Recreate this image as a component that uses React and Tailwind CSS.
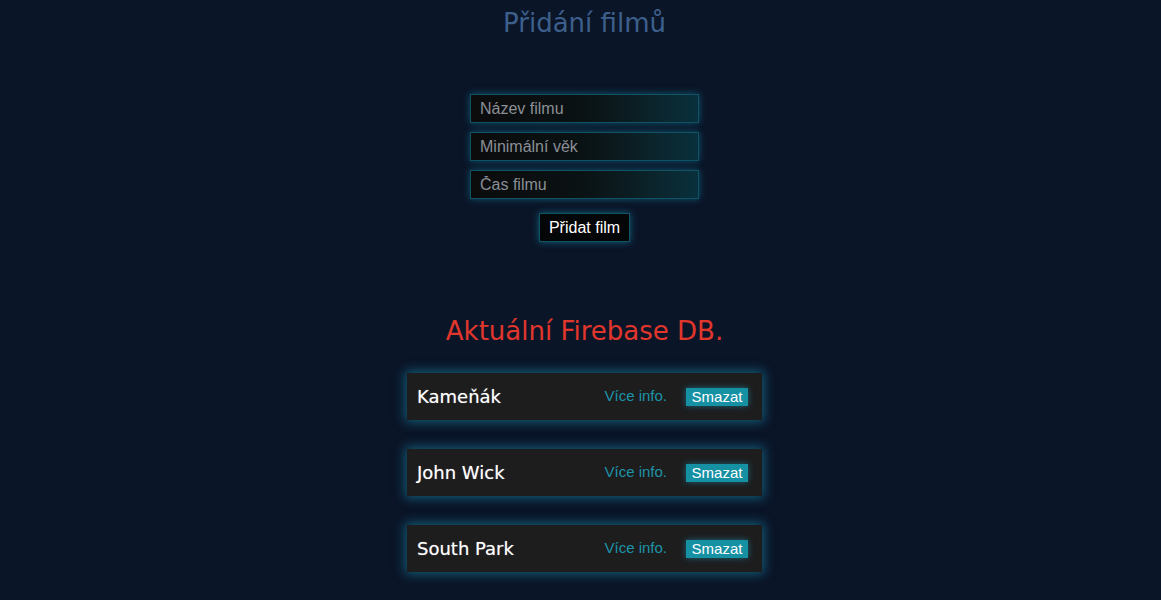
import React, { useState } from "react";

const FILMS = ["Kameňák", "John Wick", "South Park"];

const inputCls =
  "w-[229px] h-[29px] px-[9px] text-[16px] text-gray-200 placeholder:text-[#8a8f96] border border-[#0f5364] bg-gradient-to-r from-[#0b0b0c] via-[#0a1214] to-[#08303c] shadow-[0_0_7px_rgba(20,150,180,0.5)] outline-none font-['Liberation_Sans',Arial,sans-serif]";

const App = () => {
  const [form, setForm] = useState({ name: "", age: "", time: "" });

  const handleChange = (e) =>
    setForm({ ...form, [e.target.name]: e.target.value });

  return (
    <div className="min-h-screen bg-[#0b1528] flex flex-col items-center pl-[8px]">
      <h1 className="mt-[4px] text-[26px] leading-[38px] text-[#3d5f8c] font-['DejaVu_Sans',sans-serif]">
        Přidání filmů
      </h1>

      <form
        className="mt-[52px] flex flex-col items-center gap-[9px]"
        onSubmit={(e) => e.preventDefault()}
      >
        <input
          name="name"
          placeholder="Název filmu"
          value={form.name}
          onChange={handleChange}
          className={inputCls}
        />
        <input
          name="age"
          placeholder="Minimální věk"
          value={form.age}
          onChange={handleChange}
          className={inputCls}
        />
        <input
          name="time"
          placeholder="Čas filmu"
          value={form.time}
          onChange={handleChange}
          className={inputCls}
        />
        <button
          type="submit"
          className="mt-[5px] w-[91px] h-[29px] bg-[#050607] text-white text-[16px] border border-[#0f5364] shadow-[0_0_7px_rgba(20,150,180,0.6)] font-['Liberation_Sans',Arial,sans-serif]"
        >
          Přidat film
        </button>
      </form>

      <h2 className="mt-[72px] text-[26px] leading-[34px] text-[#e0362c] font-['DejaVu_Sans',sans-serif]">
        Aktuální Firebase DB.
      </h2>

      <div className="mt-[25px] flex flex-col gap-[29px]">
        {FILMS.map((film) => (
          <div
            key={film}
            className="w-[355px] h-[47px] bg-[#1d1d1e] flex items-center pl-[10px] pr-[14px] shadow-[0_0_10px_2px_rgba(24,150,185,0.55)]"
          >
            <span className="text-[18px] text-white font-['DejaVu_Sans',sans-serif] [text-shadow:0_0_1px_rgba(255,255,255,0.5)]">
              {film}
            </span>
            <span className="ml-auto text-[15px] text-[#1d93a8] font-['Liberation_Sans',Arial,sans-serif]">
              Více info.
            </span>
            <button className="ml-[19px] w-[62px] h-[18px] bg-[#1690a3] text-white text-[15px] leading-[18px] shadow-[0_0_6px_rgba(30,170,200,0.5)] font-['Liberation_Sans',Arial,sans-serif]">
              Smazat
            </button>
          </div>
        ))}
      </div>
    </div>
  );
};

export default App;
